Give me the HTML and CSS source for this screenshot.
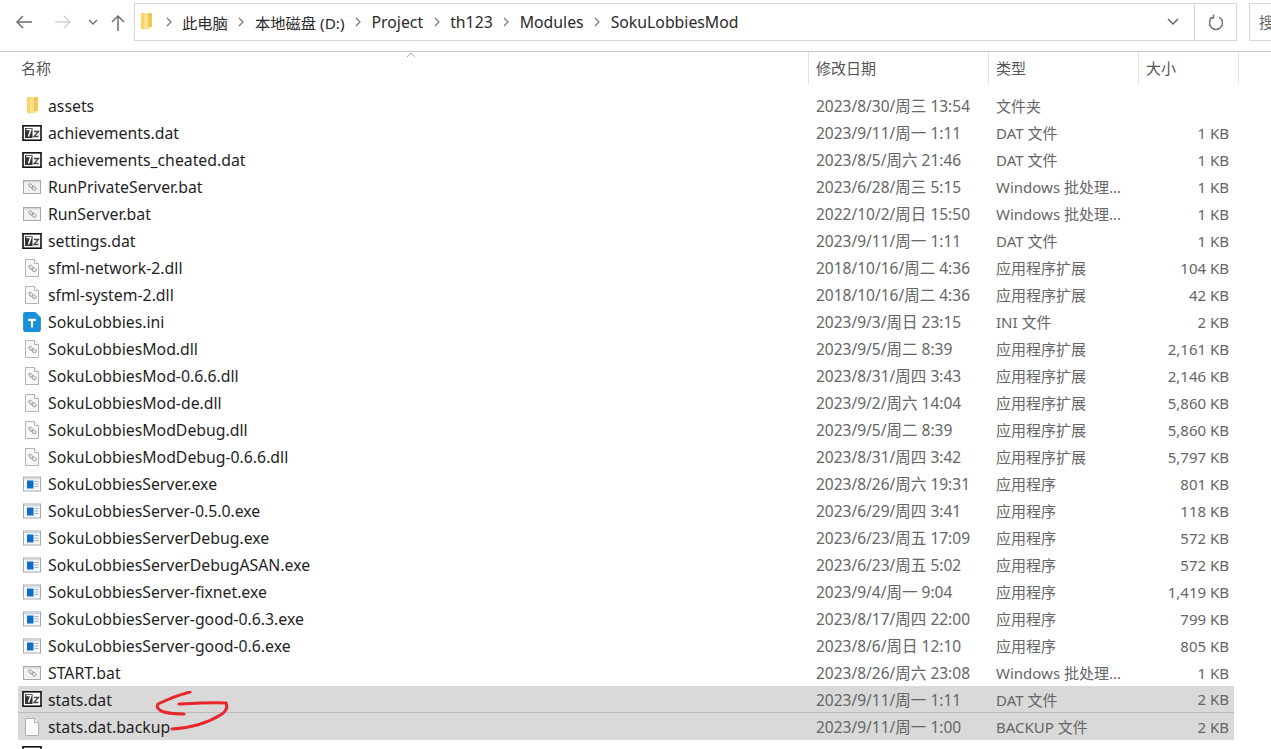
FILE: index.html
```html
<!DOCTYPE html>
<html lang="zh-CN">
<head>
  <meta charset="UTF-8">
  <title>SokuLobbiesMod</title>
  <link rel="stylesheet" href="styles.css">
</head>
<body>
  <svg class="defs" width="0" height="0" aria-hidden="true">
    <symbol id="i-folder" viewBox="0 0 18 20">
      <path d="M4 1h9v16H4z" fill="#fbe08a"/>
      <path d="M4 1h3v16H4z" fill="#f7d36a"/>
      <path d="M11 1h4v14h-4z" fill="#f3c658"/>
      <path d="M4 17l3 2v-2z" fill="#fdf0c8"/>
    </symbol>
    <symbol id="i-7z" viewBox="0 0 20 20">
      <rect x="1" y="2.800" width="18" height="14.400" fill="#fff" stroke="#111" stroke-width="1.600"/>
      <rect x="3" y="5" width="7.500" height="10" fill="#333"/>
      <path d="M4.300 6.500h4.600L6.500 13.500" fill="none" stroke="#fff" stroke-width="1.500"/>
      <path d="M12 8.500h4.500l-4.500 5h4.500" fill="none" stroke="#444" stroke-width="1.300"/>
    </symbol>
    <symbol id="i-bat" viewBox="0 0 20 20">
      <rect x="1.500" y="3.500" width="17" height="13" fill="#f2f2f2" stroke="#a8a8a8"/>
      <rect x="2" y="4" width="16" height="1.500" fill="#d8d8d8"/>
      <path d="M6.500 7.500l2-1 2.500 2.500-1 2-2-.5zM10 10l2-1 2.500 2.500-1.500 2-2.500-1z" fill="#e4e4e4" stroke="#a0a0a0"/>
    </symbol>
    <symbol id="i-dll" viewBox="0 0 16 20">
      <path d="M1.500 1.500h9l4 4v13h-13z" fill="#f8f8f8" stroke="#b4b4b4"/>
      <path d="M10.500 1.500v4h4" fill="#fff" stroke="#b4b4b4"/>
      <path d="M4.500 8l2-1 2.500 2.500-1 2-2-.5zM8 10.500l2-1 2.500 2.500-1.500 2-2.500-1z" fill="#e8e8e8" stroke="#a0a0a0"/>
    </symbol>
    <symbol id="i-ini" viewBox="0 0 16 18">
      <path d="M0 2a2 2 0 0 1 2-2h9l5 5v11a2 2 0 0 1-2 2H2a2 2 0 0 1-2-2z" fill="#1a8fdc"/>
      <path d="M4.500 6h7v2h-2.500v6h-2V8h-2.500z" fill="#fff"/>
    </symbol>
    <symbol id="i-exe" viewBox="0 0 20 20">
      <rect x="1.500" y="3" width="17" height="14" fill="#f6f8fb" stroke="#a4aab2"/>
      <rect x="2" y="3.500" width="16" height="1.800" fill="#cfd6de"/>
      <rect x="5" y="6.500" width="6.500" height="8" fill="#0f6fc6"/>
      <path d="M12.500 7.500h4M12.500 10h4M12.500 12.500h4" stroke="#9fb2c6"/>
    </symbol>
    <symbol id="i-file" viewBox="0 0 16 20">
      <path d="M1.500 1.500h9l4 4v13h-13z" fill="#fafafa" stroke="#b0b0b0"/>
      <path d="M10.500 1.500v4h4" fill="#fff" stroke="#b0b0b0"/>
    </symbol>
    <symbol id="i-chev" viewBox="0 0 6 10">
      <path d="M1 1l4 4-4 4" fill="none" stroke="#777" stroke-width="1.200"/>
    </symbol>
  </svg>

  <header class="toolbar">
    <button class="nav-btn">
      <svg width="18" height="16" viewBox="0 0 18 16"><path d="M17 8H2M8 2L2 8l6 6" fill="none" stroke="#6e6e6e" stroke-width="1.500"/></svg>
    </button>
    <button class="nav-btn nav-btn-forward">
      <svg width="18" height="16" viewBox="0 0 18 16"><path d="M1 8h15M10 2l6 6-6 6" fill="none" stroke="#d2d2d2" stroke-width="1.500"/></svg>
    </button>
    <button class="nav-btn nav-btn-down">
      <svg width="10" height="7" viewBox="0 0 10 7"><path d="M1 1l4 4 4-4" fill="none" stroke="#777" stroke-width="1.500"/></svg>
    </button>
    <button class="nav-btn nav-btn-up">
      <svg width="14" height="17" viewBox="0 0 14 17"><path d="M7 17V2M1 8l6-6 6 6" fill="none" stroke="#6e6e6e" stroke-width="1.500"/></svg>
    </button>

    <div class="address">
      <svg class="address-folder" width="18" height="20"><use href="#i-folder"/></svg>
      <div class="crumbs">
        <span class="chev"><svg width="6" height="10"><use href="#i-chev"/></svg></span><span class="crumb-cjk">此电脑</span>
        <span class="chev"><svg width="6" height="10"><use href="#i-chev"/></svg></span><span class="crumb-cjk">本地磁盘 (D:)</span>
        <span class="chev"><svg width="6" height="10"><use href="#i-chev"/></svg></span><span>Project</span>
        <span class="chev"><svg width="6" height="10"><use href="#i-chev"/></svg></span><span>th123</span>
        <span class="chev"><svg width="6" height="10"><use href="#i-chev"/></svg></span><span>Modules</span>
        <span class="chev"><svg width="6" height="10"><use href="#i-chev"/></svg></span><span>SokuLobbiesMod</span>
      </div>
      <div class="address-down">
        <svg width="12" height="8" viewBox="0 0 12 8"><path d="M1 1l5 5 5-5" fill="none" stroke="#666" stroke-width="1.500"/></svg>
      </div>
      <div class="address-refresh">
        <svg width="16" height="17" viewBox="0 0 16 17"><path d="M5 3.200a6.500 6.500 0 1 0 6 0M5.500 0.500v3.500H1.800" fill="none" stroke="#777" stroke-width="1.500"/></svg>
      </div>
    </div>
    <div class="search">搜</div>
  </header>

  <div class="columns">
    <div class="col col-name">名称<span class="sort">
      <svg width="10" height="6" viewBox="0 0 10 6"><path d="M1 5l4-4 4 4" fill="none" stroke="#aaa"/></svg>
    </span></div>
    <div class="col">修改日期</div>
    <div class="col">类型</div>
    <div class="col">大小</div>
  </div>

  <main class="list">
    <div class="row"><span class="name"><svg class="icon"><use href="#i-folder"/></svg>assets</span><span class="date">2023/8/30/周三 13:54</span><span class="type">文件夹</span><span class="size"></span></div>
    <div class="row"><span class="name"><svg class="icon"><use href="#i-7z"/></svg>achievements.dat</span><span class="date">2023/9/11/周一 1:11</span><span class="type">DAT 文件</span><span class="size">1 KB</span></div>
    <div class="row"><span class="name"><svg class="icon"><use href="#i-7z"/></svg>achievements_cheated.dat</span><span class="date">2023/8/5/周六 21:46</span><span class="type">DAT 文件</span><span class="size">1 KB</span></div>
    <div class="row"><span class="name"><svg class="icon"><use href="#i-bat"/></svg>RunPrivateServer.bat</span><span class="date">2023/6/28/周三 5:15</span><span class="type">Windows 批处理...</span><span class="size">1 KB</span></div>
    <div class="row"><span class="name"><svg class="icon"><use href="#i-bat"/></svg>RunServer.bat</span><span class="date">2022/10/2/周日 15:50</span><span class="type">Windows 批处理...</span><span class="size">1 KB</span></div>
    <div class="row"><span class="name"><svg class="icon"><use href="#i-7z"/></svg>settings.dat</span><span class="date">2023/9/11/周一 1:11</span><span class="type">DAT 文件</span><span class="size">1 KB</span></div>
    <div class="row"><span class="name"><svg class="icon"><use href="#i-dll"/></svg>sfml-network-2.dll</span><span class="date">2018/10/16/周二 4:36</span><span class="type">应用程序扩展</span><span class="size">104 KB</span></div>
    <div class="row"><span class="name"><svg class="icon"><use href="#i-dll"/></svg>sfml-system-2.dll</span><span class="date">2018/10/16/周二 4:36</span><span class="type">应用程序扩展</span><span class="size">42 KB</span></div>
    <div class="row"><span class="name"><svg class="icon"><use href="#i-ini"/></svg>SokuLobbies.ini</span><span class="date">2023/9/3/周日 23:15</span><span class="type">INI 文件</span><span class="size">2 KB</span></div>
    <div class="row"><span class="name"><svg class="icon"><use href="#i-dll"/></svg>SokuLobbiesMod.dll</span><span class="date">2023/9/5/周二 8:39</span><span class="type">应用程序扩展</span><span class="size">2,161 KB</span></div>
    <div class="row"><span class="name"><svg class="icon"><use href="#i-dll"/></svg>SokuLobbiesMod-0.6.6.dll</span><span class="date">2023/8/31/周四 3:43</span><span class="type">应用程序扩展</span><span class="size">2,146 KB</span></div>
    <div class="row"><span class="name"><svg class="icon"><use href="#i-dll"/></svg>SokuLobbiesMod-de.dll</span><span class="date">2023/9/2/周六 14:04</span><span class="type">应用程序扩展</span><span class="size">5,860 KB</span></div>
    <div class="row"><span class="name"><svg class="icon"><use href="#i-dll"/></svg>SokuLobbiesModDebug.dll</span><span class="date">2023/9/5/周二 8:39</span><span class="type">应用程序扩展</span><span class="size">5,860 KB</span></div>
    <div class="row"><span class="name"><svg class="icon"><use href="#i-dll"/></svg>SokuLobbiesModDebug-0.6.6.dll</span><span class="date">2023/8/31/周四 3:42</span><span class="type">应用程序扩展</span><span class="size">5,797 KB</span></div>
    <div class="row"><span class="name"><svg class="icon"><use href="#i-exe"/></svg>SokuLobbiesServer.exe</span><span class="date">2023/8/26/周六 19:31</span><span class="type">应用程序</span><span class="size">801 KB</span></div>
    <div class="row"><span class="name"><svg class="icon"><use href="#i-exe"/></svg>SokuLobbiesServer-0.5.0.exe</span><span class="date">2023/6/29/周四 3:41</span><span class="type">应用程序</span><span class="size">118 KB</span></div>
    <div class="row"><span class="name"><svg class="icon"><use href="#i-exe"/></svg>SokuLobbiesServerDebug.exe</span><span class="date">2023/6/23/周五 17:09</span><span class="type">应用程序</span><span class="size">572 KB</span></div>
    <div class="row"><span class="name"><svg class="icon"><use href="#i-exe"/></svg>SokuLobbiesServerDebugASAN.exe</span><span class="date">2023/6/23/周五 5:02</span><span class="type">应用程序</span><span class="size">572 KB</span></div>
    <div class="row"><span class="name"><svg class="icon"><use href="#i-exe"/></svg>SokuLobbiesServer-fixnet.exe</span><span class="date">2023/9/4/周一 9:04</span><span class="type">应用程序</span><span class="size">1,419 KB</span></div>
    <div class="row"><span class="name"><svg class="icon"><use href="#i-exe"/></svg>SokuLobbiesServer-good-0.6.3.exe</span><span class="date">2023/8/17/周四 22:00</span><span class="type">应用程序</span><span class="size">799 KB</span></div>
    <div class="row"><span class="name"><svg class="icon"><use href="#i-exe"/></svg>SokuLobbiesServer-good-0.6.exe</span><span class="date">2023/8/6/周日 12:10</span><span class="type">应用程序</span><span class="size">805 KB</span></div>
    <div class="row"><span class="name"><svg class="icon"><use href="#i-bat"/></svg>START.bat</span><span class="date">2023/8/26/周六 23:08</span><span class="type">Windows 批处理...</span><span class="size">1 KB</span></div>
    <div class="row selected"><span class="name"><svg class="icon"><use href="#i-7z"/></svg>stats.dat</span><span class="date">2023/9/11/周一 1:11</span><span class="type">DAT 文件</span><span class="size">2 KB</span></div>
    <div class="row selected last"><span class="name"><svg class="icon"><use href="#i-file"/></svg>stats.dat.backup</span><span class="date">2023/9/11/周一 1:00</span><span class="type">BACKUP 文件</span><span class="size">2 KB</span></div>
    <div class="row"><span class="name"><svg class="icon"><use href="#i-7z"/></svg></span></div>
  </main>

  <!-- red marker scribble on top of the screenshot -->
  <svg class="scribble" width="100" height="50" viewBox="0 0 100 50">
    <path d="M40 1C28 4 18 8 8 13c-2 3 0 6 6 8 8 2 14 2 20 2" fill="none" stroke="#e8262c" stroke-width="3" stroke-linecap="round"/>
    <path d="M29 13c18-1 35-2 47-1 2 4 0 8-4 11-14 9-32 14-50 15" fill="none" stroke="#e8262c" stroke-width="3" stroke-linecap="round"/>
  </svg>
</body>
</html>
```

FILE: styles.css
```css
* {
  margin: 0;
  padding: 0;
  box-sizing: border-box;
}

html, body {
  height: 100%;
  overflow: hidden;
}

body {
  font-family: "Noto Sans", "Noto Sans CJK SC", sans-serif;
  font-size: 15px;
  background: #ffffff;
  color: #1f1f1f;
  position: relative;
}

.defs {
  display: block;
}

/* top bar */
.toolbar {
  display: flex;
  align-items: flex-start;
  height: 52px;
  padding-top: 3px;
  border-bottom: 1px solid #c9c9c9;
}

.nav-btn {
  display: flex;
  align-items: center;
  justify-content: center;
  height: 38px;
  border: none;
  background: none;
  flex-shrink: 0;
  width: 18px;
  margin-left: 15px;
}

.nav-btn-forward {
  margin-left: 21px;
}

.nav-btn-down {
  width: 10px;
  margin-left: 16px;
}

.nav-btn-up {
  width: 14px;
  margin-left: 13px;
}

.address {
  display: flex;
  align-items: center;
  width: 1103px;
  height: 38px;
  margin-left: 9px;
  border: 1px solid #d6d6d6;
  flex-shrink: 0;
}

.address-folder {
  margin-left: 2px;
  flex-shrink: 0;
}

.crumbs {
  display: flex;
  align-items: center;
  flex: 1;
  font-size: 15.8px;
  color: #2a2a2a;
}

.crumb-cjk {
  font-size: 15.3px;
}

.chev {
  display: flex;
  justify-content: center;
  width: 27px;
}

.address-down {
  width: 42px;
  display: flex;
  justify-content: center;
}

.address-refresh {
  display: flex;
  align-items: center;
  justify-content: center;
  width: 42px;
  height: 100%;
  border-left: 1px solid #d6d6d6;
}

.search {
  margin-left: 12px;
  flex: 1;
  height: 38px;
  line-height: 36px;
  padding-left: 9px;
  border: 1px solid #d6d6d6;
  border-right: none;
  color: #666;
}

/* column headers */
.columns {
  display: grid;
  grid-template-columns: 790px 180px 150px 100px;
  margin-left: 19px;
  height: 32px;
  color: #555;
}

.col {
  position: relative;
  line-height: 32px;
  padding-left: 7px;
  border-right: 1px solid #e4e4e4;
}

.col-name {
  padding-left: 2px;
}

.sort {
  position: absolute;
  top: -3px;
  left: 387px;
  line-height: 6px;
}

/* file rows */
.list {
  padding: 8px 37px 0 18px;
}

.row {
  display: grid;
  grid-template-columns: 790px 180px 150px 96px;
  align-items: center;
  height: 27px;
  white-space: nowrap;
}

.row.selected {
  background: #d9d9d9;
  border-bottom: 1px solid #bcbcbc;
}

.row.last {
  border-bottom: none;
}

.name {
  display: flex;
  align-items: center;
  padding-left: 4px;
  padding-top: 1px;
  font-size: 15.8px;
}

.icon {
  width: 20px;
  height: 20px;
  margin-top: -1px;
  margin-right: 6px;
  flex-shrink: 0;
}

.date,
.type,
.size {
  color: #666;
}

.date {
  font-size: 15.5px;
}

.date,
.type {
  padding-left: 8px;
}

.size {
  text-align: right;
  padding-right: 5px;
}

.scribble {
  position: absolute;
  left: 150px;
  top: 691px;
}
```
